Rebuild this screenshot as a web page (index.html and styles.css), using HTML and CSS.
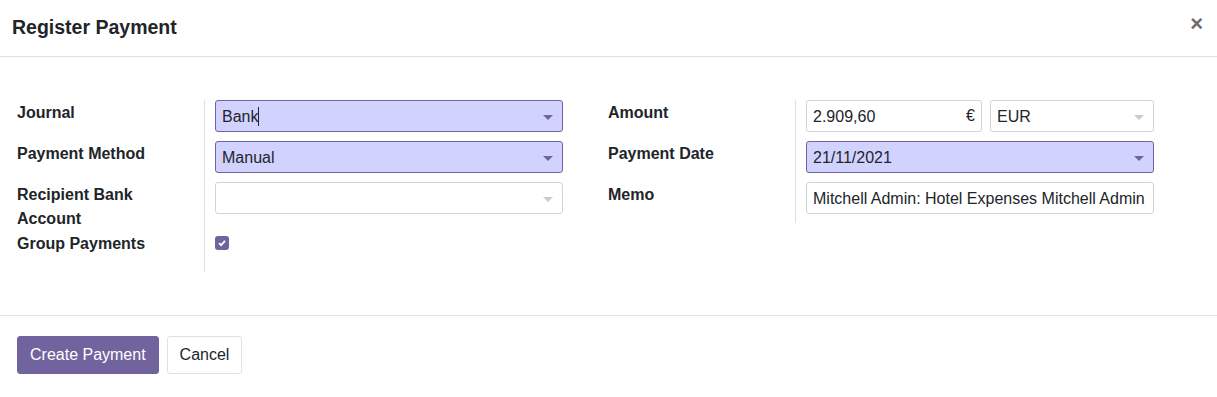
FILE: index.html
```html
<!DOCTYPE html>
<html lang="en">
<head>
    <meta charset="UTF-8">
    <title>Register Payment</title>
    <link rel="stylesheet" href="styles.css">
</head>
<body>
    <div class="modal">
        <div class="modal-header">
            <h4 class="modal-title">Register Payment</h4>
            <span class="close">&times;</span>
        </div>

        <div class="modal-body">
            <div class="group">
                <div class="label">Journal</div>
                <div class="value">
                    <div class="field required">Bank<span class="caret"></span><span class="arrow"></span></div>
                </div>

                <div class="label">Payment Method</div>
                <div class="value">
                    <div class="field required">Manual<span class="arrow"></span></div>
                </div>

                <div class="label">Recipient Bank Account</div>
                <div class="value">
                    <div class="field"><span class="arrow muted"></span></div>
                </div>

                <div class="label">Group Payments</div>
                <div class="value">
                    <span class="checkbox">
                        <svg width="10" height="10" viewBox="0 0 10 10"><path d="M2 5.2 L4.1 7.2 L8 2.9" fill="none" stroke="#fff" stroke-width="1.8"/></svg>
                    </span>
                </div>
            </div>

            <div class="group">
                <div class="label">Amount</div>
                <div class="value amount-row">
                    <div class="field amount">2.909,60<span class="currency">€</span></div>
                    <div class="field currency-select">EUR<span class="arrow muted"></span></div>
                </div>

                <div class="label">Payment Date</div>
                <div class="value">
                    <div class="field required">21/11/2021<span class="arrow"></span></div>
                </div>

                <div class="label">Memo</div>
                <div class="value">
                    <div class="field memo">Mitchell Admin: Hotel Expenses Mitchell Admin</div>
                </div>
            </div>
        </div>

        <div class="modal-footer">
            <button class="btn btn-primary">Create Payment</button>
            <button class="btn btn-secondary">Cancel</button>
        </div>
    </div>
</body>
</html>
```

FILE: styles.css
```css
body {
    margin: 0;
    font-family: 'Liberation Sans', Arial, sans-serif;
    font-size: 16px;
    color: #212529;
    background: #fff;
}

.modal {
    width: 1217px;
}

.modal-header {
    height: 57px;
    box-sizing: border-box;
    border-bottom: 1px solid #dee2e6;
    display: flex;
    align-items: center;
    justify-content: space-between;
    padding: 0 14px 2px 12px;
}

.modal-title {
    margin: 0;
    font-size: 19.5px;
    font-weight: 700;
    color: #212529;
}

.close {
    font-size: 22px;
    font-weight: 700;
    color: #6c6c6c;
    line-height: 1;
    margin-top: -6px;
}

.modal-body {
    display: flex;
    gap: 45px;
    padding: 43px 17px 43px;
}

.group {
    display: grid;
    grid-template-columns: 188px 358px;
    align-content: start;
}

.label {
    font-weight: 700;
    line-height: 24px;
    padding-top: 1px;
    border-right: 1px solid #dee2e6;
    padding-right: 10px;
}

.value {
    padding-left: 10px;
    padding-bottom: 9px;
    min-height: 32px;
}

.field {
    position: relative;
    box-sizing: border-box;
    height: 32px;
    line-height: 32px;
    padding: 0 24px 0 6px;
    border: 1px solid #ced4da;
    border-radius: 3px;
    background: #fff;
    white-space: nowrap;
    overflow: hidden;
}

.field.required {
    background: #d2d2ff;
    border-color: #71639e;
}

.caret {
    display: inline-block;
    width: 1px;
    height: 19px;
    background: #212529;
    vertical-align: -4px;
}

.arrow {
    position: absolute;
    right: 9px;
    top: 14px;
    border-left: 5px solid transparent;
    border-right: 5px solid transparent;
    border-top: 5px solid #71639e;
}

.arrow.muted {
    border-top-color: #ccc;
}

.amount-row {
    display: flex;
    gap: 8px;
}

.amount {
    width: 176px;
    padding-right: 6px;
}

.currency {
    position: absolute;
    right: 6px;
    top: -1px;
}

.currency-select {
    width: 164px;
}

.memo {
    padding-right: 2px;
}

.checkbox {
    display: flex;
    align-items: center;
    justify-content: center;
    width: 14px;
    height: 14px;
    margin-top: 5px;
    background: #71639e;
    border-radius: 3px;
}

.modal-footer {
    border-top: 1px solid #dee2e6;
    padding: 20px 17px 24px;
    display: flex;
    gap: 8px;
}

.btn {
    font-family: 'Liberation Sans', Arial, sans-serif;
    font-size: 16px;
    height: 38px;
    padding: 0 12px;
    border-radius: 3px;
    border: 1px solid transparent;
    cursor: pointer;
}

.btn-primary {
    background: #71639e;
    color: #fff;
    border-color: #71639e;
    padding: 0 12px;
}

.btn-secondary {
    background: #fff;
    color: #212529;
    border-color: #dee2e6;
}
```
